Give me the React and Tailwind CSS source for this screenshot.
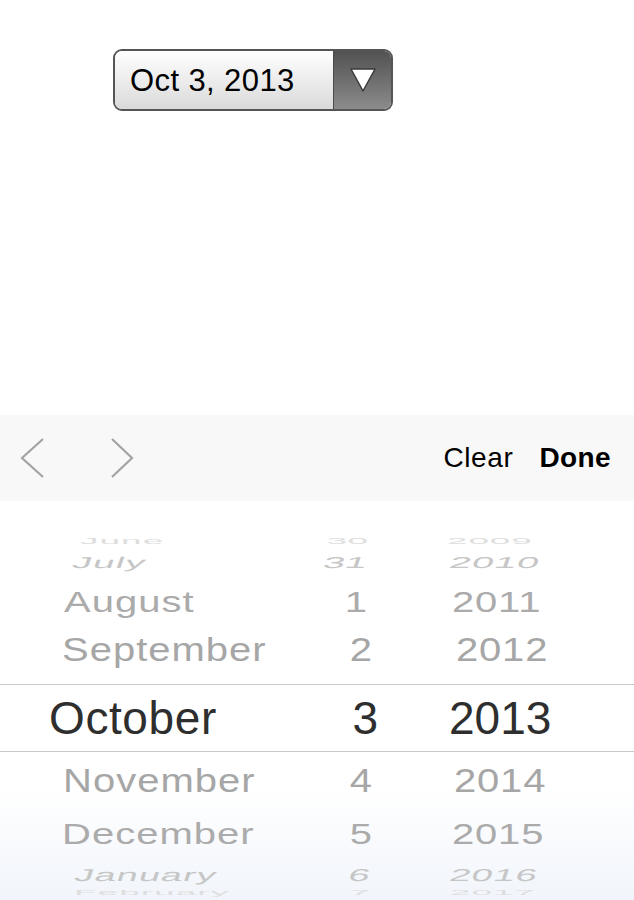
import React, { useState } from "react";

const rows = [
  { m: "June", d: "30", y: "2009", h: "h-[20px]", size: "text-[37px]", fx: "scale-y-[0.22]", color: "text-[#dedede]", ml: "pl-[80px]", dr: "pr-[12px]", yl: "pl-[67px]" },
  { m: "July", d: "31", y: "2010", h: "h-[22px]", size: "text-[39px]", fx: "scale-y-[0.4] -skew-x-[8deg]", color: "text-[#c6c6c6]", ml: "pl-[73px]", dr: "pr-[13px]", yl: "pl-[70px]" },
  { m: "August", d: "1", y: "2011", h: "h-[56px]", size: "text-[40px]", fx: "scale-y-[0.76]", color: "text-[#ababab]", ml: "pl-[64px]", dr: "pr-[13px]", yl: "pl-[72px]" },
  { m: "September", d: "2", y: "2012", h: "h-[40px]", size: "text-[40px]", fx: "scale-y-[0.85]", color: "text-[#a6a6a6]", ml: "pl-[62px]", dr: "pr-[8px]", yl: "pl-[76px]" },
];

const below = [
  { m: "November", d: "4", y: "2014", h: "h-[48px]", size: "text-[40px]", fx: "scale-y-[0.85]", color: "text-[#a6a6a6]", ml: "pl-[63px]", dr: "pr-[8px]", yl: "pl-[74px]" },
  { m: "December", d: "5", y: "2015", h: "h-[60px]", size: "text-[40px]", fx: "scale-y-[0.72]", color: "text-[#ababab]", ml: "pl-[62px]", dr: "pr-[8px]", yl: "pl-[72px]" },
  { m: "January", d: "6", y: "2016", h: "h-[22px]", size: "text-[38px]", fx: "scale-y-[0.45] -skew-x-[8deg]", color: "text-[#c6c6c6]", ml: "pl-[75px]", dr: "pr-[10px]", yl: "pl-[70px]" },
  { m: "February", d: "7", y: "2017", h: "h-[12px]", size: "text-[37px]", fx: "scale-y-[0.2]", color: "text-[#dedede]", ml: "pl-[74px]", dr: "pr-[10px]", yl: "pl-[70px]" },
];

function WheelRow({ r }) {
  return (
    <div className={`flex items-center ${r.h}`}>
      <div className={`flex w-full items-center leading-none ${r.size} ${r.color} ${r.fx}`}>
        <div className={`w-[300px] tracking-[1px] ${r.ml}`}>{r.m}</div>
        <div className={`w-[80px] text-right ${r.dr}`}>{r.d}</div>
        <div className={`tracking-[0.8px] ${r.yl}`}>{r.y}</div>
      </div>
    </div>
  );
}

export default function App() {
  const [open] = useState(true);

  return (
    <div className="w-[634px] h-[900px] overflow-hidden bg-white font-['Liberation_Sans',Arial,sans-serif]">
      <div className="h-[415px] pt-[49px] pl-[113px]">
        <div className="flex w-[280px] h-[62px] rounded-[9px] border-2 border-[#555] overflow-hidden">
          <div className="flex-1 flex items-center pl-[15px] bg-linear-to-b from-white to-[#dadada] text-[31px] tracking-[0.4px] text-black leading-none">
            Oct 3, 2013
          </div>
          <div className="w-[58px] flex items-center justify-center border-l border-[#4a4a4a] bg-linear-to-b from-[#525252] to-[#8c8c8c]">
            <svg width="28" height="26" viewBox="0 0 28 26">
              <polygon points="2,2 26,2 14,24" fill="white" stroke="#3a3a3a" strokeWidth="1.5" strokeLinejoin="round" />
            </svg>
          </div>
        </div>
      </div>

      {open && (
        <div>
          <div className="flex items-center h-[86px] bg-[#f8f8f8] pl-[20px] pr-[23px]">
            <svg width="24" height="40" viewBox="0 0 24 40" className="mr-[66px]">
              <polyline points="23,1 2,20 23,39" fill="none" stroke="#a3a3a3" strokeWidth="2.2" />
            </svg>
            <svg width="24" height="40" viewBox="0 0 24 40">
              <polyline points="2,1 22,20 2,39" fill="none" stroke="#a3a3a3" strokeWidth="2.2" />
            </svg>
            <div className="flex-1" />
            <button className="text-[28px] tracking-[0.6px] text-black leading-none mr-[26px]">Clear</button>
            <button className="text-[28px] tracking-[0.4px] font-bold text-black leading-none">Done</button>
          </div>

          <div className="h-[399px] overflow-hidden bg-linear-to-b from-white from-[72%] to-[#f1f5fb]">
            <div className="h-[30px]" />
            {rows.map((r) => (
              <WheelRow key={r.m} r={r} />
            ))}
            <div className="h-[15px]" />
            <div className="flex items-center h-[68px] border-y border-[#c8c8c8] bg-white text-[46px] text-[#2e2e2e] leading-none">
              <div className="w-[300px] pl-[49px] tracking-[0.6px]">October</div>
              <div className="w-[80px] text-right pr-[2px]">3</div>
              <div className="pl-[69px]">2013</div>
            </div>
            <div className="h-[4px]" />
            {below.map((r) => (
              <WheelRow key={r.m} r={r} />
            ))}
          </div>
        </div>
      )}
    </div>
  );
}
